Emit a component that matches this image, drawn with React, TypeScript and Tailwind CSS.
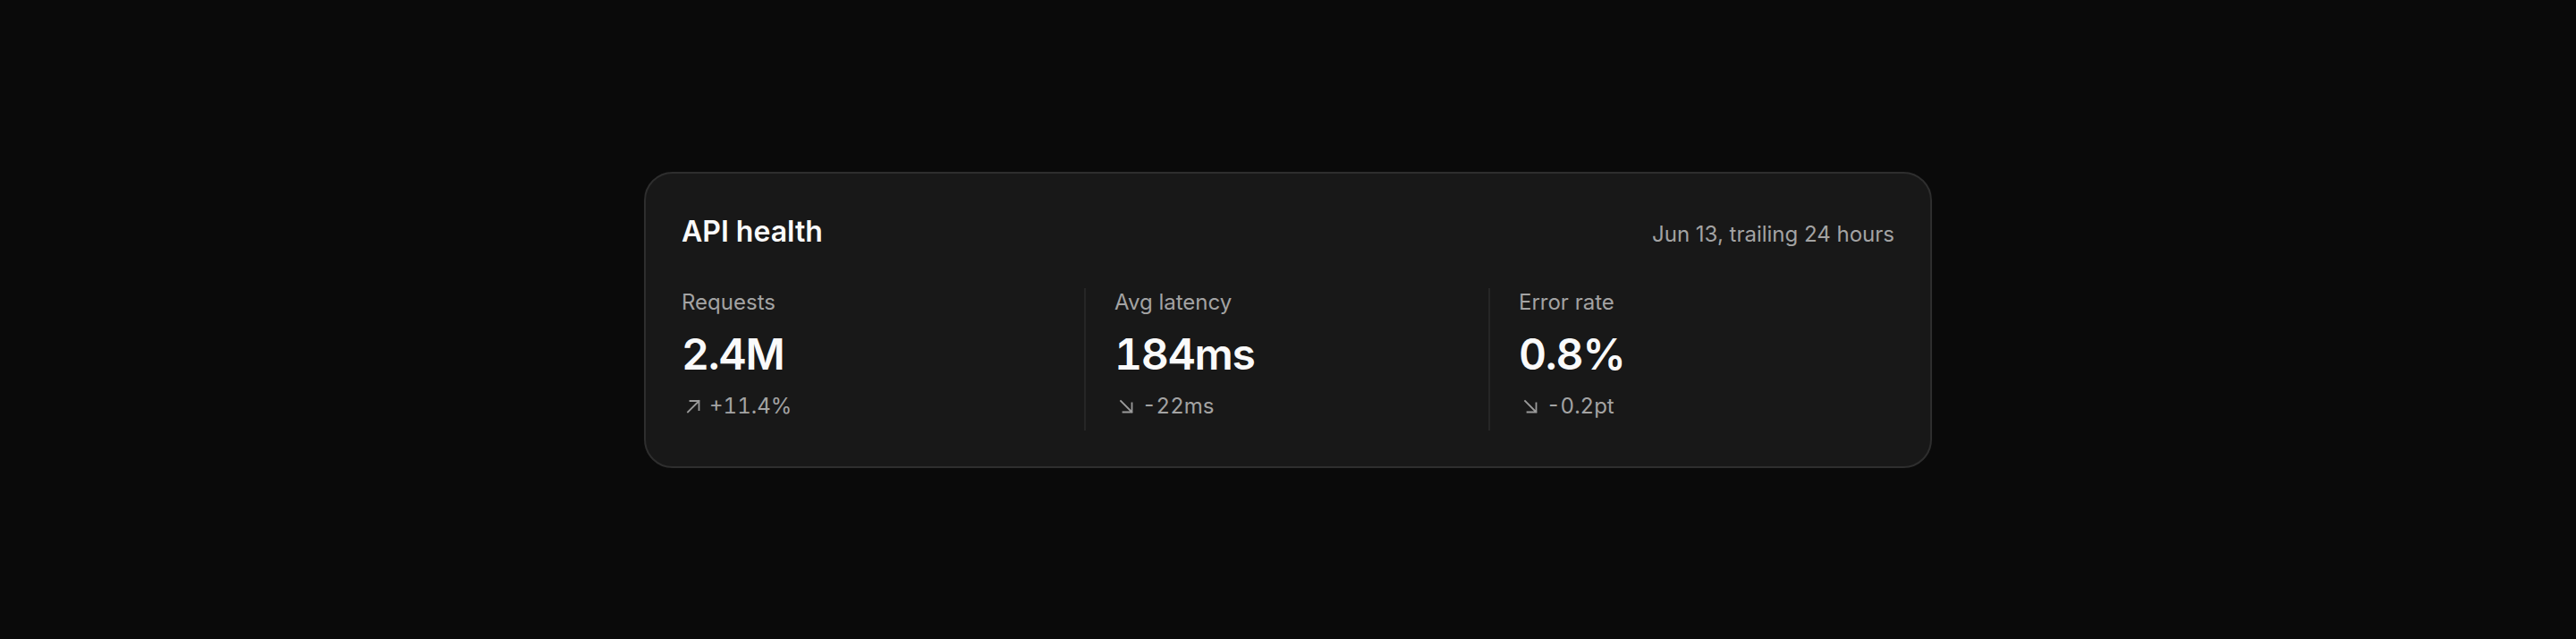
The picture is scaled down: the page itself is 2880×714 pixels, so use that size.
import React from "react";

type MetricProps = {
  label: string;
  value: string;
  delta: string;
  dir: "up" | "down";
  divider?: boolean;
};

function Arrow({ dir }: { dir: "up" | "down" }) {
  return (
    <svg width="16" height="16" viewBox="0 0 16 16" fill="none" className="shrink-0">
      {dir === "up" ? (
        <path d="M2 14.5 L14.5 2 M4.5 2 H14.5 V12" stroke="#9a9a9a" strokeWidth="1.8" strokeLinecap="square" />
      ) : (
        <path d="M2 2 L14.5 14.5 M4.5 14.5 H14.5 V4.5" stroke="#9a9a9a" strokeWidth="1.8" strokeLinecap="square" />
      )}
    </svg>
  );
}

function Metric({ label, value, delta, dir, divider }: MetricProps) {
  return (
    <div className={divider ? "border-l-2 border-[#262626] pl-8 pb-[11px]" : "pr-8 pb-[11px]"}>
      <div className="text-[24px] leading-[32px] text-[#a3a3a3]">{label}</div>
      <div className="mt-[10px] text-[48px] leading-[64px] font-semibold text-[#fafafa] tracking-[-0.025em] tabular-nums">{value}</div>
      <div className="mt-[10px] flex items-center gap-[10px] pl-[5px] text-[24px] leading-[32px] text-[#a3a3a3] tabular-nums">
        <Arrow dir={dir} />
        <span>{delta}</span>
      </div>
    </div>
  );
}

export default function App() {
  return (
    <div className="h-screen w-full bg-[#0a0a0a] flex items-center justify-center font-['Inter',sans-serif]">
      <div className="w-[1440px] rounded-[32px] border-2 border-[#2e2e2e] bg-[#181818] p-10">
        <div className="flex items-baseline justify-between">
          <h2 className="text-[32px] leading-[50px] font-semibold text-[#fafafa]">API health</h2>
          <span className="text-[24px] leading-[32px] text-[#a3a3a3]">Jun 13, trailing 24 hours</span>
        </div>
        <div className="mt-[38px] grid grid-cols-[450px_452px_1fr]">
          <Metric label="Requests" value="2.4M" delta="+11.4%" dir="up" />
          <Metric label="Avg latency" value="184ms" delta="-22ms" dir="down" divider />
          <Metric label="Error rate" value="0.8%" delta="-0.2pt" dir="down" divider />
        </div>
      </div>
    </div>
  );
}
